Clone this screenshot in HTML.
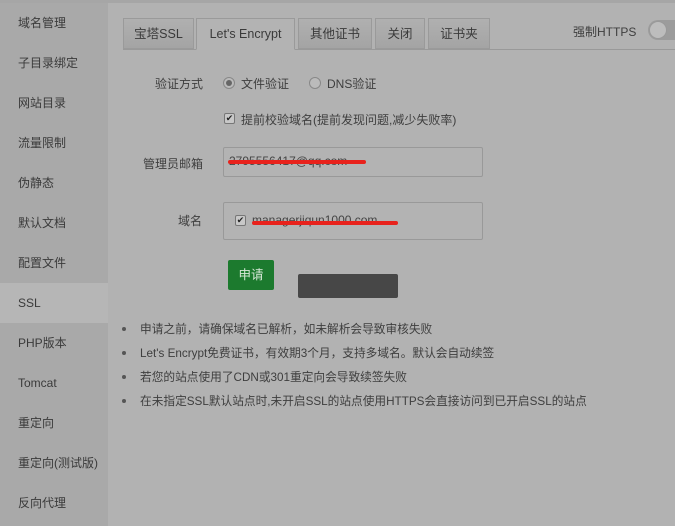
<!DOCTYPE html>
<html><head><meta charset="utf-8"><style>
*{margin:0;padding:0;box-sizing:border-box}
body{width:675px;height:526px;background:#b2b2b2;font-family:"Liberation Sans","Noto Sans CJK SC",sans-serif;font-size:12px;color:#3e3e3e;position:relative;overflow:hidden}
.top{position:absolute;left:0;top:0;width:675px;height:3px;background:#a6a6a6}
.side{position:absolute;left:0;top:3px;width:108px;height:523px;background:#a9a9a9}
.side div{height:40px;line-height:40px;padding-left:18px;font-size:12px;color:#3a3a3a}
.side .act{background:#b6b6b6}
.a{position:absolute}
.tab{position:absolute;top:18px;height:31px;line-height:31px;text-align:center;border:1px solid #9a9a9a;background:linear-gradient(#b0b0b0,#a4a4a4);font-size:12.5px;color:#3a3a3a}
.tab.on{background:#b3b3b3;border-bottom-color:#b3b3b3;height:32px}
.line{position:absolute;left:123px;top:49px;width:552px;height:1px;background:#999}
.inp{position:absolute;border:1px solid #999;border-radius:2px;background:#b3b3b3}
.cb{position:absolute;width:11px;height:11px;border:1px solid #777;border-radius:2px;background:#c8c8c8;font-size:9px;line-height:9px;text-align:center;color:#222}
.rd{position:absolute;width:12px;height:12px;border:1px solid #888;border-radius:50%;background:#bbb}
.red{position:absolute;height:4px;background:#e8221c;border-radius:2px}
li{position:absolute;left:122px;list-style:none;font-size:11.7px;color:#3e3e3e}
li:before{content:"";position:absolute;left:0;top:7px;width:4px;height:4px;border-radius:50%;background:#555}
li span{padding-left:18px}
</style></head><body>
<div class="top"></div>
<div class="side">
<div>域名管理</div><div>子目录绑定</div><div>网站目录</div><div>流量限制</div><div>伪静态</div><div>默认文档</div><div>配置文件</div><div class="act">SSL</div><div>PHP版本</div><div>Tomcat</div><div>重定向</div><div>重定向(测试版)</div><div>反向代理</div>
</div>
<div class="line"></div>
<div class="tab" style="left:123px;width:71px">宝塔SSL</div>
<div class="tab on" style="left:196px;width:99px">Let's Encrypt</div>
<div class="tab" style="left:298px;width:74px">其他证书</div>
<div class="tab" style="left:375px;width:50px">关闭</div>
<div class="tab" style="left:428px;width:62px">证书夹</div>
<div class="a" style="left:573px;top:23px;font-size:12px">强制HTTPS</div>
<div class="a" style="left:648px;top:20px;width:40px;height:20px;border-radius:10px;background:#9c9c9c"></div>
<div class="a" style="left:649px;top:21px;width:18px;height:18px;border-radius:50%;background:#bdbdbd;border:1px solid #999"></div>

<div class="a" style="left:155px;top:75px">验证方式</div>
<div class="rd" style="left:223px;top:77px"><div style="width:6px;height:6px;border-radius:50%;background:#666;margin:2px"></div></div>
<div class="a" style="left:241px;top:75px">文件验证</div>
<div class="rd" style="left:309px;top:77px"></div>
<div class="a" style="left:327px;top:75px">DNS验证</div>
<div class="cb" style="left:224px;top:113px">✔</div>
<div class="a" style="left:241px;top:111px">提前校验域名(提前发现问题,减少失败率)</div>

<div class="a" style="left:143px;top:155px">管理员邮箱</div>
<div class="inp" style="left:223px;top:147px;width:260px;height:30px"></div>
<div class="a" style="left:229px;top:154px;color:#444">2795556417@qq.com</div>
<div class="red" style="left:228px;top:160px;width:138px"></div>

<div class="a" style="left:178px;top:212px">域名</div>
<div class="inp" style="left:223px;top:202px;width:260px;height:38px"></div>
<div class="cb" style="left:235px;top:215px">✔</div>
<div class="a" style="left:252px;top:213px;color:#444">managerjiqun1000.com</div>
<div class="red" style="left:252px;top:221px;width:146px"></div>

<div class="a" style="left:228px;top:260px;width:46px;height:30px;background:#1c7a2e;border-radius:2px;color:#d8e8d8;text-align:center;line-height:30px;font-size:12.5px">申请</div>
<div class="a" style="left:298px;top:274px;width:100px;height:24px;background:#474747;border-radius:2px"></div>

<li style="top:320px"><span>申请之前，请确保域名已解析，如未解析会导致审核失败</span></li>
<li style="top:344px"><span>Let's Encrypt免费证书，有效期3个月，支持多域名。默认会自动续签</span></li>
<li style="top:368px"><span>若您的站点使用了CDN或301重定向会导致续签失败</span></li>
<li style="top:392px"><span>在未指定SSL默认站点时,未开启SSL的站点使用HTTPS会直接访问到已开启SSL的站点</span></li>
</body></html>
